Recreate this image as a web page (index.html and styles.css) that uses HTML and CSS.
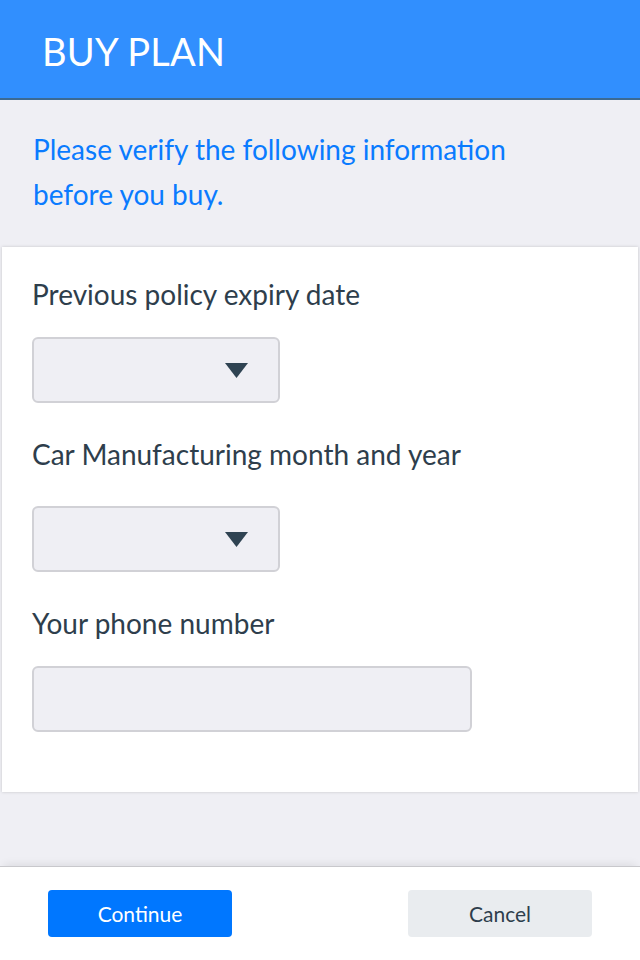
FILE: index.html
```html
<!DOCTYPE html>
<html lang="en">
<head>
<meta charset="utf-8">
<title>Buy Plan</title>
<link rel="stylesheet" href="styles.css">
</head>
<body>
<div class="page">
  <header class="topbar">
    <h1 class="topbar-title">BUY PLAN</h1>
  </header>
  <p class="intro">Please verify the following information before you buy.</p>
  <section class="card">
    <div class="field">
      <label class="field-label">Previous policy expiry date</label>
      <div class="select">
        <svg class="caret" width="23" height="15" viewBox="0 0 23 15"><path d="M0 0H23L11.5 15Z" fill="#2f4352"/></svg>
      </div>
    </div>
    <div class="field field-wide-gap">
      <label class="field-label">Car Manufacturing month and year</label>
      <div class="select">
        <svg class="caret" width="23" height="15" viewBox="0 0 23 15"><path d="M0 0H23L11.5 15Z" fill="#2f4352"/></svg>
      </div>
    </div>
    <div class="field">
      <label class="field-label">Your phone number</label>
      <div class="input"></div>
    </div>
  </section>
  <div class="spacer"></div>
  <footer class="actions">
    <button class="btn btn-primary">Continue</button>
    <button class="btn btn-secondary">Cancel</button>
  </footer>
</div>
</body>
</html>
```

FILE: styles.css
```css
* { box-sizing: border-box; }
html, body { margin: 0; padding: 0; }
body {
  background: #efeff4;
  font-family: Lato, "Noto Sans", sans-serif;
  color: #2e3e4c;
}
.page {
  display: flex;
  flex-direction: column;
  height: 960px;
}
.topbar {
  height: 100px;
  background: #318ffe;
  border-bottom: 2px solid #3c6a93;
  padding: 4px 0 0 42px;
  display: flex;
  align-items: center;
}
.topbar-title {
  margin: 0;
  color: #fff;
  font-weight: 400;
  font-size: 38px;
  letter-spacing: 0.2px;
}
.intro {
  margin: 0;
  padding: 27px 120px 30px 33px;
  color: #0a7bff;
  font-size: 28px;
  line-height: 45px;
}
.card {
  background: #fff;
  margin: 0 2px;
  padding: 31px 30px 60px 30px;
  box-shadow: 0 0 3px rgba(0,0,0,0.18);
  display: flex;
  flex-direction: column;
  gap: 35px;
}
.field {
  display: flex;
  flex-direction: column;
  align-items: flex-start;
  gap: 27px;
}
.field-wide-gap { gap: 36px; }
.field-label {
  font-size: 28px;
  line-height: 32px;
  color: #2e3e4c;
}
.select, .input {
  height: 66px;
  background: #efeff4;
  border: 2px solid #d1d1d6;
  border-radius: 6px;
}
.select {
  width: 248px;
  display: flex;
  align-items: center;
  justify-content: flex-end;
  padding-right: 30px;
}
.caret { display: block; margin-top: 1px; }
.input { width: 440px; }
.spacer { flex: 1; }
.actions {
  height: 94px;
  background: #fff;
  border-top: 1px solid #c8c8cc;
  box-shadow: 0 -6px 8px -4px rgba(0,0,0,0.08);
  display: flex;
  justify-content: space-between;
  align-items: flex-start;
  padding: 23px 48px 0 48px;
}
.btn {
  width: 184px;
  height: 47px;
  border: none;
  border-radius: 4px;
  font-family: Lato, "Noto Sans", sans-serif;
  font-size: 21px;
  padding: 0;
}
.btn-primary { background: #0077ff; color: #fff; }
.btn-secondary { background: #e9ecef; color: #2e3e4c; }
```
